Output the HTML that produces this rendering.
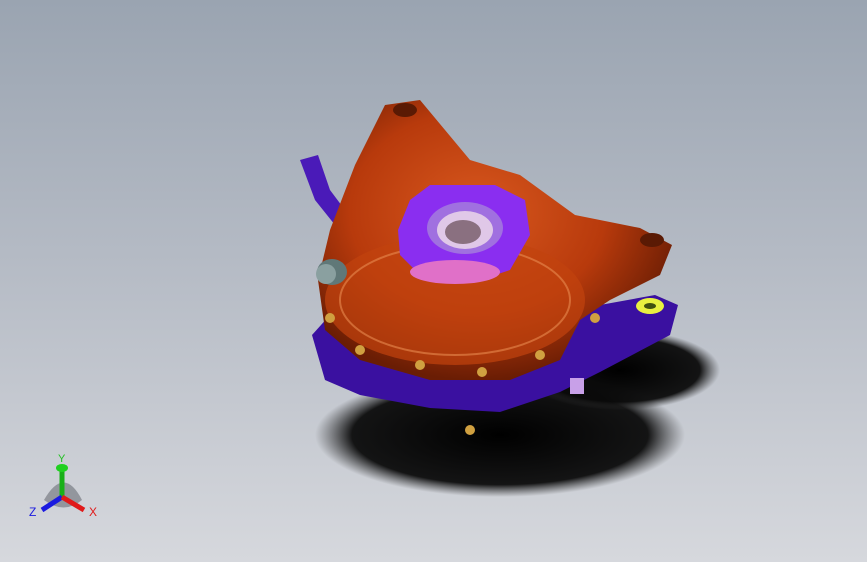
<!DOCTYPE html>
<html><head><style>
html,body{margin:0;padding:0;}
body{width:867px;height:562px;overflow:hidden;background:linear-gradient(#9aa4b1 0%,#b4bac4 45%,#d6d8dd 100%);}
svg{position:absolute;left:0;top:0}
</style></head><body>
<svg width="867" height="562" viewBox="0 0 867 562">
<defs>
<radialGradient id="sh" cx="0.5" cy="0.5" r="0.5">
<stop offset="0" stop-color="#000" stop-opacity="1"/>
<stop offset="0.8" stop-color="#0a0a0a" stop-opacity="0.95"/>
<stop offset="1" stop-color="#333" stop-opacity="0"/>
</radialGradient>
<radialGradient id="or" cx="0.45" cy="0.4" r="0.6">
<stop offset="0" stop-color="#d8581e"/>
<stop offset="0.6" stop-color="#b83a0c"/>
<stop offset="1" stop-color="#6a1d04"/>
</radialGradient>
</defs>
<ellipse cx="500" cy="435" rx="185" ry="62" fill="url(#sh)"/>
<ellipse cx="620" cy="370" rx="100" ry="40" fill="url(#sh)"/>
<!-- purple base -->
<path d="M312,335 L330,315 L600,305 L655,295 L678,305 L670,335 L600,372 L560,392 L500,412 L430,408 L360,395 L325,380 Z" fill="#3a10a0"/>
<path d="M300,160 L318,155 L330,190 L345,210 L335,225 L315,200 Z" fill="#4a1ab8"/>
<!-- orange body -->
<path d="M355,165 L385,105 L420,100 L470,160 L520,175 L575,215 L640,228 L672,245 L660,275 L610,300 L580,320 L560,360 L510,380 L430,380 L360,360 L325,330 L318,280 L330,230 Z" fill="url(#or)"/>
<ellipse cx="455" cy="300" rx="130" ry="65" fill="#c2430e" opacity="0.7"/>
<ellipse cx="455" cy="300" rx="115" ry="55" fill="none" stroke="#e88a50" stroke-width="2" opacity="0.6"/>
<ellipse cx="405" cy="110" rx="12" ry="7" fill="#5a1a04"/>
<ellipse cx="652" cy="240" rx="12" ry="7" fill="#5a1a04"/>
<!-- purple flange -->
<path d="M410,200 L430,185 L495,185 L525,200 L530,235 L510,270 L480,280 L420,275 L400,255 L398,230 Z" fill="#8a2ef0"/>
<ellipse cx="465" cy="228" rx="38" ry="26" fill="#a070e0"/>
<ellipse cx="465" cy="230" rx="28" ry="19" fill="#e0c8e8"/>
<ellipse cx="463" cy="232" rx="18" ry="12" fill="#8a7080"/>
<ellipse cx="455" cy="272" rx="45" ry="12" fill="#e070c8"/>
<ellipse cx="332" cy="272" rx="15" ry="13" fill="#607878"/>
<ellipse cx="326" cy="274" rx="10" ry="10" fill="#8aa0a0"/>
<ellipse cx="650" cy="306" rx="14" ry="8" fill="#e8f040"/>
<ellipse cx="650" cy="306" rx="6" ry="3" fill="#405010"/>
<rect x="570" y="378" width="14" height="16" fill="#c8a0e8"/>
<g fill="#d0a040"><circle cx="330" cy="318" r="5"/><circle cx="360" cy="350" r="5"/><circle cx="420" cy="365" r="5"/><circle cx="482" cy="372" r="5"/><circle cx="540" cy="355" r="5"/><circle cx="595" cy="318" r="5"/><circle cx="470" cy="430" r="5"/></g>
<path d="M44,500 Q64,465 82,500 Q64,515 44,500Z" fill="#6a6e76" opacity="0.6"/>
<line x1="62" y1="497" x2="62" y2="467" stroke="#18b018" stroke-width="5"/>
<ellipse cx="62" cy="468" rx="6" ry="4" fill="#20d020"/>
<line x1="62" y1="497" x2="42" y2="510" stroke="#1a1ae0" stroke-width="5"/>
<line x1="62" y1="497" x2="84" y2="510" stroke="#e01a1a" stroke-width="5"/>
<text x="58" y="462" font-family="Liberation Sans,sans-serif" font-size="11" fill="#20c020">Y</text>
<text x="29" y="516" font-family="Liberation Sans,sans-serif" font-size="12" fill="#1a1ae0">Z</text>
<text x="89" y="516" font-family="Liberation Sans,sans-serif" font-size="12" fill="#e01a1a">X</text>
</svg>
</body></html>
